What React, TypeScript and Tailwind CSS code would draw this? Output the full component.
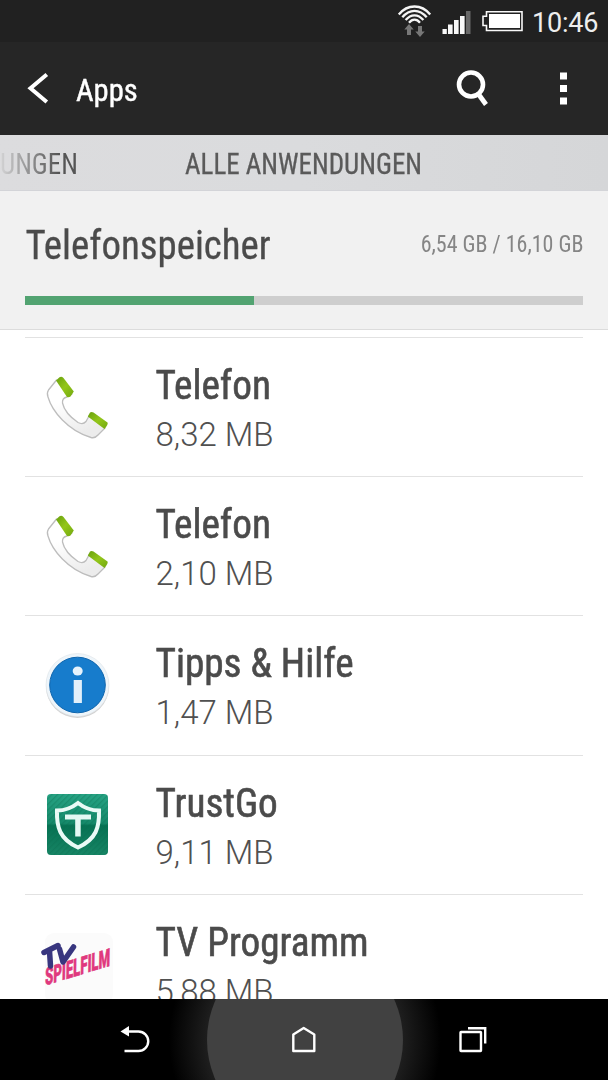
import React from "react";

const condensed = "font-['Roboto_Condensed','Roboto',sans-serif] [font-stretch:75%]";

function StatusBar() {
  return (
    <div className="flex h-[42px] shrink-0 items-center justify-end bg-[#212121] pr-[10px]">
      <svg width="132" height="42" viewBox="397 0 132 42" className="shrink-0">
        <g fill="none" stroke="#f5f5f5" strokeWidth="2.3">
          <path d="M398.800 14.500C407.500 3.800 421.500 3.800 430.200 14.500" />
          <path d="M402.300 17.300C409.500 8.700 419.500 8.700 426.700 17.300" />
          <path d="M405.600 20C411 13.700 418 13.700 423.400 20" />
          <path d="M409 22.700C412.300 18.700 416.700 18.700 420 22.700" />
        </g>
        <path d="M409 24l4.700 5.500h-2.700V35h-4v-5.500h-2.700z" fill="#777" />
        <path d="M420 37l-4.700-5.500h2.700V26h4v5.500h2.700z" fill="#777" />
        <g fill="#f8f8f8">
          <rect x="442.500" y="29" width="4.300" height="5" />
          <rect x="448" y="24.500" width="4.600" height="9.500" />
          <rect x="454" y="20" width="4.600" height="14" />
          <rect x="460" y="16" width="4.600" height="18" />
        </g>
        <rect x="466" y="11" width="4.500" height="23" fill="#686868" />
        <path d="M486.500 11.700h35.500v18.800h-35.500v-5h-3.500v-9.200h3.500z" fill="none" stroke="#f8f8f8" strokeWidth="1.600" />
        <rect x="489" y="14" width="31" height="14" fill="#fff" />
      </svg>
      <span className="ml-[3px] w-[66px] whitespace-nowrap pt-[3px] text-right font-['Roboto'] text-[27px] leading-[42px] tracking-[-0.2px] text-[#eee]">10:46</span>
    </div>
  );
}

function ActionBar() {
  return (
    <header className="flex h-[93px] shrink-0 items-center bg-[#262626]">
      <svg width="76" height="93" viewBox="0 42 76 93">
        <path d="M46.800 74.500L30.500 88.200L46.800 102" fill="none" stroke="#fff" strokeWidth="4" />
      </svg>
      <h1 className={`${condensed} origin-left scale-x-[0.955] pt-[3px] text-[32px] leading-[40px] text-white [-webkit-text-stroke:0.4px_#fff]`}>Apps</h1>
      <svg width="158" height="93" viewBox="450 42 158 93" className="ml-auto">
        <circle cx="471" cy="84.500" r="12" fill="none" stroke="#fff" strokeWidth="4.600" />
        <path d="M478 93.500L486 104.500" stroke="#fff" strokeWidth="4.800" />
        <g fill="#fff">
          <rect x="560" y="72.500" width="7" height="7" />
          <rect x="560" y="85" width="7" height="7" />
          <rect x="560" y="97.500" width="7" height="7" />
        </g>
      </svg>
    </header>
  );
}

function TabBar() {
  return (
    <nav className={`${condensed} flex h-[56px] shrink-0 items-center border-b border-[#d3d4d8] bg-linear-to-r from-[#dcdcde] via-[#dadbdd] to-[#d5d6d8] pt-[3px] text-[29px] leading-[40px] whitespace-nowrap`}>
      <span className="w-[84px] shrink-0 origin-left scale-x-[0.93] bg-linear-to-r from-[#d4d4d5] to-[#555] to-75% bg-clip-text text-transparent">UNGEN</span>
      <span className="ml-[101px] origin-left scale-x-[0.93] text-[#5a5a5a] [-webkit-text-stroke:0.3px_#5a5a5a]">ALLE ANWENDUNGEN</span>
    </nav>
  );
}

function Storage() {
  return (
    <section className={`${condensed} h-[139px] shrink-0 border-b border-[#dcdcdc] bg-[#f1f1f1] px-[25px] pt-[28px]`}>
      <div className="flex h-[52px] items-center justify-between whitespace-nowrap">
        <h2 className="origin-left scale-x-[0.948] pl-[0.5px] text-[41px] leading-[52px] text-[#4b4b4b] [-webkit-text-stroke:0.3px_#4b4b4b]">Telefonspeicher</h2>
        <span className="origin-right scale-x-[0.955] text-[23px] leading-[48px] text-[#858585]">6,54 GB / 16,10 GB</span>
      </div>
      <div className="mt-[25px] h-[9px] bg-[#cecece]">
        <div className="h-full w-[229px] bg-[#52a371]" />
      </div>
    </section>
  );
}

function PhoneIcon() {
  return (
    <svg width="80" height="80" viewBox="0 0 80 80">
      <defs>
        <linearGradient id="handset" x1="0" y1="0" x2="0.400" y2="1">
          <stop offset="0.400" stopColor="#fff" />
          <stop offset="1" stopColor="#ececec" />
        </linearGradient>
        <linearGradient id="cap" x1="0" y1="0" x2="1" y2="1">
          <stop offset="0" stopColor="#68a00e" />
          <stop offset="0.500" stopColor="#93c61a" />
          <stop offset="1" stopColor="#72a80f" />
        </linearGradient>
      </defs>
      <path d="M18.500 13L10.500 23Q8.500 26 10 30C14 44 30 64 53 70.500Q57 71.500 60 68L67 61L51 49L48 54.500Q45 58 40 55.500C32 50 26 43 24.500 36Q24 31 29 30L34 27Z" fill="url(#handset)" stroke="#bdbdbd" strokeWidth="1.300" strokeLinejoin="round" />
      <path d="M18 13.500L21.500 10.300Q23.500 9 25.500 11L35.800 24.500L32.500 29.500Q31 30.500 29 30Z" fill="url(#cap)" />
      <path d="M49.800 49.500L52 45.500Q53.500 44.500 55.500 45.500L69.500 55.500Q70.500 57 66.500 62Z" fill="url(#cap)" />
    </svg>
  );
}

function InfoIcon() {
  return (
    <svg width="80" height="80" viewBox="0 0 80 80">
      <circle cx="39.500" cy="41.500" r="31.500" fill="#d2d2d2" />
      <circle cx="39.500" cy="40" r="31.500" fill="#eef5fa" stroke="#dfe4e8" strokeWidth="0.600" />
      <circle cx="39.500" cy="40" r="27.800" fill="#177ccc" stroke="#0f65ad" strokeWidth="1" />
      <ellipse cx="39.700" cy="26" rx="5" ry="4.500" fill="#e7f3fc" />
      <rect x="35.700" y="35" width="8.200" height="23" fill="#e3f0fa" />
    </svg>
  );
}

function TrustGoIcon() {
  return (
    <svg width="80" height="80" viewBox="0 0 80 80">
      <defs>
        <linearGradient id="tg" x1="0" y1="0" x2="0" y2="1">
          <stop offset="0" stopColor="#27a384" />
          <stop offset="0.480" stopColor="#15896a" />
          <stop offset="0.520" stopColor="#067253" />
          <stop offset="1" stopColor="#178565" />
        </linearGradient>
        <pattern id="stripes" width="4" height="4" patternUnits="userSpaceOnUse" patternTransform="rotate(45)">
          <rect width="1.300" height="4" fill="#0a6a4e" opacity="0.300" />
        </pattern>
      </defs>
      <rect x="9" y="9" width="61" height="61" rx="4" fill="url(#tg)" />
      <rect x="9" y="9" width="61" height="61" rx="4" fill="url(#stripes)" />
      <path d="M40 18Q30.500 25.500 19 25.500C18.500 42 21.500 54 40 62.500C58.500 54 61.500 42 61 25.500Q49.500 25.500 40 18Z" fill="none" stroke="#eafaf6" strokeWidth="4" />
      <path d="M27 29.500h26v5h-10.300v17h-5.500v-17h-10.200z" fill="#e4f8f3" />
    </svg>
  );
}

function TvIcon() {
  return (
    <svg width="80" height="80" viewBox="0 0 80 80">
      <rect x="7" y="9" width="68" height="70" rx="9" fill="#fbfbfb" />
      <g transform="translate(7 61.500) skewY(-17) skewX(-1)">
        <text x="0" y="0" textLength="65" lengthAdjust="spacingAndGlyphs" fontFamily="Roboto, sans-serif" fontWeight="900" fontSize="24.500" fill="#e0397e" stroke="#e0397e" strokeWidth="0.600">SPIELFILM</text>
      </g>
      <g fill="none" stroke="#38367f" strokeWidth="5.500" strokeLinecap="round" strokeLinejoin="round">
        <path d="M6 28.500L20 21.500M11.500 27L12.500 42" />
        <path d="M21.500 25L25 38L35.500 23" />
      </g>
    </svg>
  );
}

const apps = [
  { name: "Telefon", size: "8,32 MB", icon: <PhoneIcon /> },
  { name: "Telefon", size: "2,10 MB", icon: <PhoneIcon /> },
  { name: "Tipps & Hilfe", size: "1,47 MB", icon: <InfoIcon /> },
  { name: "TrustGo", size: "9,11 MB", icon: <TrustGoIcon /> },
  { name: "TV Programm", size: "5,88 MB", icon: <TvIcon /> },
];

function AppList() {
  return (
    <ul className="min-h-0 flex-1 overflow-hidden bg-white px-[25px] pt-[7px]">
      {apps.map((app, i) => (
        <li key={i} className="flex h-[139.2px] border-t border-[#e2e2e2]">
          <div className="w-[130px] shrink-0 pt-[29px] pl-[13px]">{app.icon}</div>
          <div className="pt-[21px] whitespace-nowrap">
            <div className={`${condensed} origin-left scale-x-[0.957] pl-[0.5px] text-[41px] leading-[52px] text-[#4b4b4b] [-webkit-text-stroke:0.6px_#4b4b4b]`}>{app.name}</div>
            <div className="pl-[0.5px] font-['Roboto'] text-[33px] leading-[48px] font-light text-[#505050]">{app.size}</div>
          </div>
        </li>
      ))}
    </ul>
  );
}

function NavBar() {
  return (
    <footer className="h-[81px] shrink-0 bg-black">
      <svg width="608" height="81" viewBox="0 999 608 81">
        <defs>
          <radialGradient id="glow" cx="305" cy="1040" r="136" gradientUnits="userSpaceOnUse">
            <stop offset="0.700" stopColor="#202020" />
            <stop offset="1" stopColor="#000" />
          </radialGradient>
        </defs>
        <circle cx="305" cy="1040" r="136" fill="url(#glow)" />
        <circle cx="305" cy="1040" r="98" fill="#414141" />
        <g fill="none" stroke="#fff" strokeWidth="2.400">
          <path d="M126 1031.500H138.500A9.700 9.700 0 0 1 138.500 1051H124.500" />
          <path d="M293.300 1034.500L303.700 1028L314.300 1034.500V1051H293.300Z" strokeLinejoin="round" />
          <rect x="460.500" y="1032" width="20.500" height="19" rx="0.500" />
          <path d="M468 1028.200H485.200V1043.500" />
        </g>
        <path d="M120.500 1031.500L129 1026V1036.500Z" fill="#fff" />
      </svg>
    </footer>
  );
}

export default function App() {
  return (
    <main className="flex h-[1080px] w-[608px] flex-col overflow-hidden bg-white">
      <StatusBar />
      <ActionBar />
      <TabBar />
      <Storage />
      <AppList />
      <NavBar />
    </main>
  );
}
